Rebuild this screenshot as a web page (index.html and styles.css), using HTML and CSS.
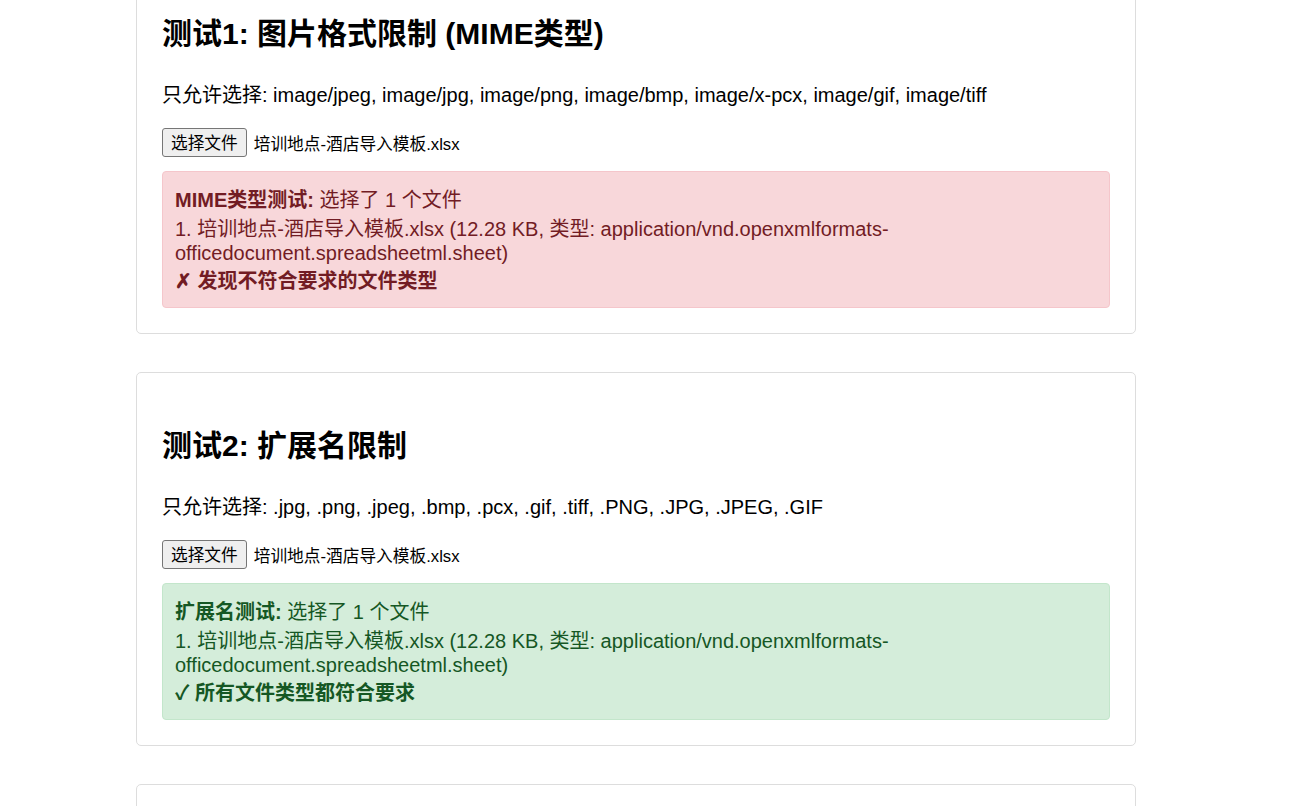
FILE: index.html
```html
<!DOCTYPE html>
<html lang="zh-CN">
<head>
    <meta charset="UTF-8">
    <meta name="viewport" content="width=device-width, initial-scale=1.0">
    <title>文件类型限制测试</title>
    <link rel="stylesheet" href="styles.css">
</head>
<body>
    <div class="container">
        <!-- 测试1 -->
        <div class="test-section">
            <h2>测试1: 图片格式限制 (MIME类型)</h2>
            <p>只允许选择: image/jpeg, image/jpg, image/png, image/bmp, image/x-pcx, image/gif, image/tiff</p>
            <div class="file-input">
                <button class="file-button">选择文件</button>
                <span class="file-name">培训地点-酒店导入模板.xlsx</span>
            </div>
            <div class="result error">
                <div class="result-title"><strong>MIME类型测试:</strong> 选择了 1 个文件</div>
                <div class="file-item">1. 培训地点-酒店导入模板.xlsx (12.28 KB, 类型: application/vnd.openxmlformats-officedocument.spreadsheetml.sheet)</div>
                <div class="result-status"><strong>✗ 发现不符合要求的文件类型</strong></div>
            </div>
        </div>

        <!-- 测试2 -->
        <div class="test-section">
            <h2>测试2: 扩展名限制</h2>
            <p>只允许选择: .jpg, .png, .jpeg, .bmp, .pcx, .gif, .tiff, .PNG, .JPG, .JPEG, .GIF</p>
            <div class="file-input">
                <button class="file-button">选择文件</button>
                <span class="file-name">培训地点-酒店导入模板.xlsx</span>
            </div>
            <div class="result success">
                <div class="result-title"><strong>扩展名测试:</strong> 选择了 1 个文件</div>
                <div class="file-item">1. 培训地点-酒店导入模板.xlsx (12.28 KB, 类型: application/vnd.openxmlformats-officedocument.spreadsheetml.sheet)</div>
                <div class="result-status"><strong>✓ 所有文件类型都符合要求</strong></div>
            </div>
        </div>

        <!-- 测试3 (下方, 超出可视区域) -->
        <div class="test-section next-section"></div>
    </div>
</body>
</html>
```

FILE: styles.css
```css
body {
    font-family: "Liberation Sans", Arial, "Noto Sans CJK SC", sans-serif;
    font-size: 20px;
    margin: 0;
    padding: 0;
    background-color: #fff;
    color: #000;
}
.container {
    width: 1000px;
    margin: -40px 0 0 136px;
}
.test-section {
    margin-bottom: 38px;
    padding: 25px;
    border: 1px solid #ddd;
    border-radius: 5px;
}
.next-section {
    min-height: 120px;
}
h2 {
    font-size: 30px;
    line-height: 36px;
    margin: 30px 0 0;
}
p {
    line-height: 24px;
    margin: 31px 0 21px;
}
.file-input {
    display: flex;
    align-items: center;
    gap: 7px;
    font-size: 16.7px;
    margin-bottom: 14px;
}
.file-button {
    font-family: inherit;
    font-size: 16.7px;
    line-height: 23px;
    padding: 3px 8px 1px;
    color: #000;
    background-color: #efefef;
    border: 1px solid #767676;
    border-radius: 3px;
}
.result {
    padding: 12px 12px;
    border: 1px solid transparent;
    border-radius: 4px;
}
.result-title {
    line-height: 28px;
    padding-top: 2px;
}
.file-item {
    line-height: 24px;
    margin-top: 3px;
}
.result-status {
    line-height: 28px;
    margin-top: 2px;
}
.error {
    background-color: #f8d7da;
    color: #721c24;
    border-color: #f5c6cb;
}
.success {
    background-color: #d4edda;
    color: #155724;
    border-color: #c3e6cb;
}
```
